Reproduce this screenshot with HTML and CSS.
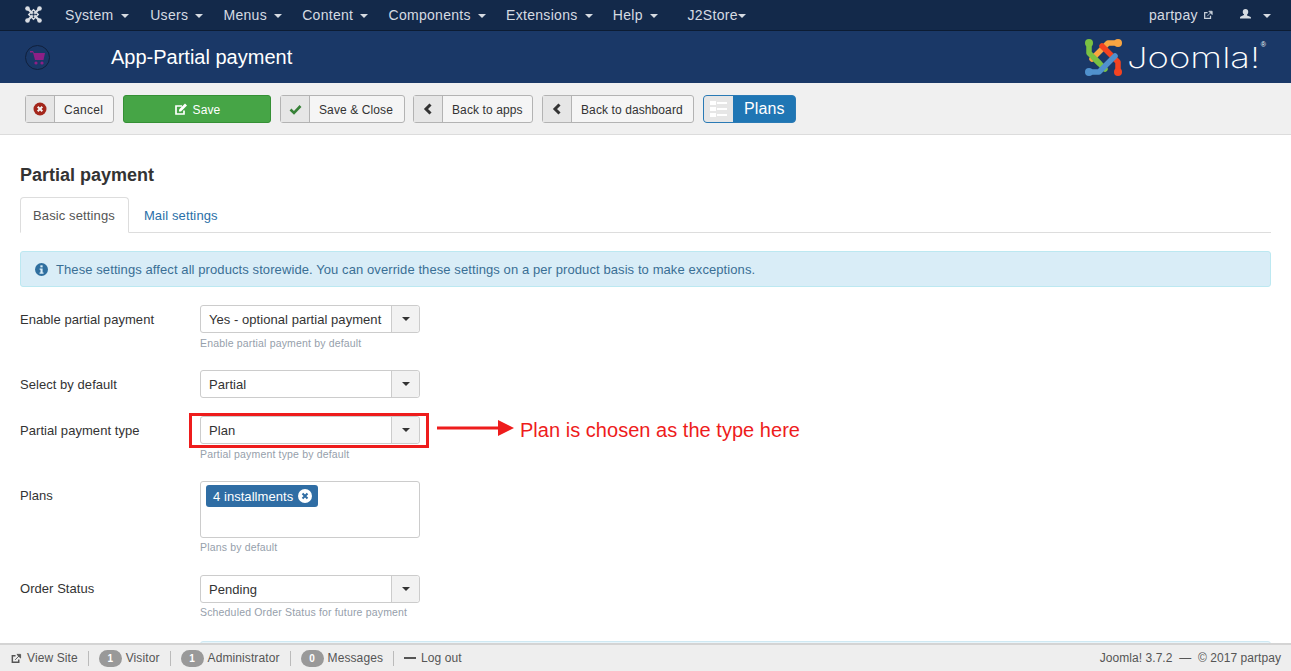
FILE: index.html
```html
<!DOCTYPE html>
<html lang="en">
<head>
<meta charset="utf-8">
<title>App-Partial payment</title>
<link rel="stylesheet" href="styles.css">
</head>
<body>
<div class="page">
  <nav class="navbar">
    <svg class="nav-logo" width="17" height="17" viewBox="0 0 17 17"><g fill="none" stroke="#d9dde3" stroke-linecap="round"><path d="M3 3L14 14M14 3L3 14" stroke-width="2.200"/><path d="M8.500 3.800L13.200 8.500 8.500 13.200 3.800 8.500z" stroke-width="1.500"/></g><g fill="#d9dde3"><circle cx="2.500" cy="2.500" r="2.300"/><circle cx="14.500" cy="2.500" r="2.300"/><circle cx="2.500" cy="14.500" r="2.300"/><circle cx="14.500" cy="14.500" r="2.300"/></g><circle cx="8.500" cy="8.500" r="1.200" fill="#13294a"/></svg>
    <ul class="menu">
      <li class="menu-item">System <i class="caret"></i></li>
      <li class="menu-item">Users <i class="caret"></i></li>
      <li class="menu-item">Menus <i class="caret"></i></li>
      <li class="menu-item">Content <i class="caret"></i></li>
      <li class="menu-item">Components <i class="caret"></i></li>
      <li class="menu-item">Extensions <i class="caret"></i></li>
      <li class="menu-item">Help <i class="caret"></i></li>
      <li class="menu-item store">J2Store<i class="caret tight"></i></li>
    </ul>
    <div class="nav-right">
      <span class="site-link">partpay
        <svg class="ext" width="10" height="10" viewBox="0 0 12 12"><path d="M9 7v3H2V3h3.500" fill="none" stroke="#c8d0da" stroke-width="1.500"/><path d="M5 7.500 L9.500 3M7 1.500h4v4z" fill="#c8d0da" stroke="#c8d0da"/></svg>
      </span>
      <span class="user-link">
        <svg width="11" height="12" viewBox="0 0 12 12"><path d="M6 0.500c2 0 3 1.400 3 3.200 0 1.300-.6 2.300-1.300 2.900v1l3.500 1.500c.5.200.8.600.8 1.100V11H0v-1.300c0-.5.300-.9.800-1.100l3.500-1.500v-1C3.600 6 3 5 3 3.700 3 1.900 4 .5 6 .5z" fill="#d6dbe2"/></svg>
        <i class="caret wide"></i>
      </span>
    </div>
  </nav>
  <header class="header">
    <span class="app-icon">
      <svg width="16" height="16" viewBox="0 0 16 16"><path d="M0 2h3l1 2h11l-1.500 7H5L3 3.500H0z" fill="#8e1f86"/><circle cx="6" cy="14" r="1.600" fill="#8e1f86"/><circle cx="12" cy="14" r="1.600" fill="#8e1f86"/></svg>
    </span>
    <h1 class="page-title">App-Partial payment</h1>
    <div class="brand">
      <svg class="brand-mark" width="37" height="37" viewBox="0 0 37 37">
        <g fill="none" stroke-linecap="round" stroke-linejoin="round" stroke-width="5.500">
          <path d="M4 4V14L20 30" stroke="#7ac143"/>
          <path d="M33 4H23L7 20" stroke="#f9a541"/>
          <path d="M33 33V23L17 7" stroke="#f44321"/>
          <path d="M4 33H14L30 17" stroke="#5091cd"/>
          <path d="M8 18L14 24" stroke="#7ac143"/>
        </g>
        <circle cx="4" cy="4" r="4" fill="#7ac143"/><circle cx="33" cy="4" r="4" fill="#f9a541"/><circle cx="4" cy="33" r="4" fill="#5091cd"/><circle cx="33" cy="33" r="4" fill="#f44321"/>
      </svg>
      <span class="brand-text">Joomla!</span><sup class="brand-reg">®</sup>
    </div>
  </header>
  <div class="toolbar">
    <button class="btn w-cancel"><span class="btn-icon"><svg width="14" height="14" viewBox="0 0 14 14"><circle cx="7" cy="7" r="6.500" fill="#a3261b"/><path d="M4.700 4.700l4.600 4.600M9.300 4.700l-4.600 4.600" stroke="#f3f3f3" stroke-width="2"/></svg></span><span class="btn-label">Cancel</span></button>
    <button class="btn btn-save"><svg width="14" height="13" viewBox="0 0 14 13"><path d="M10 7.500V11H2V3h6" fill="none" stroke="#fff" stroke-width="1.700"/><path d="M5 6.500l6-6 2 2-6 6H5z" fill="#fff"/></svg><span class="save-label">Save</span></button>
    <button class="btn w-close"><span class="btn-icon"><svg width="13" height="11" viewBox="0 0 13 11"><path d="M1.500 5.500l3.500 3.500 6.500-7" fill="none" stroke="#378137" stroke-width="2.600"/></svg></span><span class="btn-label">Save &amp; Close</span></button>
    <button class="btn w-apps"><span class="btn-icon"><svg width="10" height="12" viewBox="0 0 10 12"><path d="M7.500 1.500L3 6l4.500 4.500" fill="none" stroke="#333" stroke-width="3"/></svg></span><span class="btn-label">Back to apps</span></button>
    <button class="btn w-dash"><span class="btn-icon"><svg width="10" height="12" viewBox="0 0 10 12"><path d="M7.500 1.500L3 6l4.500 4.500" fill="none" stroke="#333" stroke-width="3"/></svg></span><span class="btn-label">Back to dashboard</span></button>
    <button class="btn btn-plans"><span class="plans-icon"><svg width="17" height="16" viewBox="0 0 17 16"><path d="M0 0h6v4H0zM0 6h6v4H0zM0 12h6v4H0z" fill="#fff"/><path d="M7 1h10v2H7zM7 7h10v2H7zM7 13h10v2H7z" fill="#fff"/></svg></span><span class="plans-label">Plans</span></button>
  </div>
  <main class="content">
    <h2 class="section-title">Partial payment</h2>
    <ul class="tabs">
      <li class="tab active">Basic settings</li>
      <li class="tab">Mail settings</li>
    </ul>
    <div class="alert">
      <svg width="13" height="13" viewBox="0 0 14 14"><circle cx="7" cy="7" r="7" fill="#2f6f9f"/><rect x="5.800" y="2.500" width="2.400" height="2.200" fill="#d9edf7"/><path d="M5 6h3.200v4.200H9.200v1.300H4.900v-1.300h1V7.300H5z" fill="#d9edf7"/></svg>
      <span>These settings affect all products storewide. You can override these settings on a per product basis to make exceptions.</span>
    </div>
    <div class="field first">
      <label class="field-label">Enable partial payment</label>
      <div class="field-control">
        <div class="select"><span class="select-value">Yes - optional partial payment</span><span class="select-arrow"><i class="caret dark"></i></span></div>
        <p class="help">Enable partial payment by default</p>
      </div>
    </div>
    <div class="field second">
      <label class="field-label">Select by default</label>
      <div class="field-control">
        <div class="select"><span class="select-value">Partial</span><span class="select-arrow"><i class="caret dark"></i></span></div>
      </div>
    </div>
    <div class="field third">
      <label class="field-label">Partial payment type</label>
      <div class="field-control">
        <div class="select"><span class="select-value">Plan</span><span class="select-arrow"><i class="caret dark"></i></span></div>
        <p class="help">Partial payment type by default</p>
      </div>
    </div>
    <div class="field fourth">
      <label class="field-label">Plans</label>
      <div class="field-control">
        <div class="multi"><span class="chip">4 installments
          <svg width="14" height="14" viewBox="0 0 14 14"><circle cx="7" cy="7" r="7" fill="#fff"/><path d="M4.500 4.500l5 5M9.500 4.500l-5 5" stroke="#2f6da4" stroke-width="2"/></svg></span></div>
        <p class="help">Plans by default</p>
      </div>
    </div>
    <div class="field fifth">
      <label class="field-label">Order Status</label>
      <div class="field-control">
        <div class="select"><span class="select-value">Pending</span><span class="select-arrow"><i class="caret dark"></i></span></div>
        <p class="help">Scheduled Order Status for future payment</p>
      </div>
    </div>
    <div class="next-box"></div>
    <div class="callout">
      <svg class="arrow" width="77" height="18" viewBox="0 0 77 18"><path d="M0 7.500h62v3H0z" fill="#ee1c1c"/><path d="M61 1l16 8-16 8z" fill="#ee1c1c"/></svg>
      <span class="callout-text">Plan is chosen as the type here</span>
    </div>
    <div class="highlight"></div>
  </main>
  <footer class="status">
    <span class="status-item"><svg width="12" height="11" viewBox="0 0 12 12"><path d="M9 7v3H2V3h3.500" fill="none" stroke="#555" stroke-width="1.600"/><path d="M5 7.500L9.500 3M7 1.500h4v4z" fill="#555" stroke="#555"/></svg>View Site</span>
    <span class="status-item"><b class="count">1</b>Visitor</span>
    <span class="status-item"><b class="count">1</b>Administrator</span>
    <span class="status-item"><b class="count">0</b>Messages</span>
    <span class="status-item"><i class="minus"></i>Log out</span>
    <span class="copyright">Joomla! 3.7.2 &nbsp;—&nbsp; © 2017 partpay</span>
  </footer>
</div>
</body>
</html>
```
FILE: styles.css
```css
* { box-sizing: border-box; }
html, body { margin: 0; height: 100%; overflow: hidden; }
body { font-family: "Liberation Sans", Arial, sans-serif; font-size: 13px; color: #333; background: #fff; }
.page { display: flex; flex-direction: column; height: 671px; }

.caret { display: inline-block; width: 0; height: 0; border-left: 4px solid transparent; border-right: 4px solid transparent; border-top: 4px solid #d6dbe2; margin-left: 3px; vertical-align: middle; }
.caret.tight { margin-left: 0; }
.caret.wide { margin-left: 8px; }
.caret.dark { border-top-color: #333; margin: 0; }

.navbar { height: 31px; flex: none; display: flex; align-items: center; background: #13294a; border-bottom: 1px solid #0c1c33; color: #d6dbe2; font-size: 14px; letter-spacing: 0.3px; padding: 0 20px 1px 25px; }
.nav-logo { flex: none; }
.menu { display: flex; list-style: none; margin: 0 0 0 23px; padding: 0; }
.menu-item { margin-right: 20px; white-space: nowrap; }
.menu-item:first-child { margin-right: 21.500px; }
.menu-item.store { margin-left: 9.500px; }
.nav-right { margin-left: auto; display: flex; align-items: center; gap: 27px; }
.site-link { display: flex; align-items: center; gap: 5px; }

.header { height: 52px; flex: none; display: flex; align-items: center; background: #1a3867; padding: 0 25px; }
.app-icon { width: 25px; height: 25px; border-radius: 50%; border: 1.500px solid #10203c; display: flex; align-items: center; justify-content: center; }
.page-title { margin: 0 0 0 61px; font-size: 20px; font-weight: 400; color: #fff; line-height: 1; }
.brand { margin-left: auto; display: flex; align-items: center; color: #fff; }
.brand-mark { flex: none; }
.brand-text { width: 133px; margin-left: 5px; font-family: Inter, sans-serif; font-weight: 200; font-size: 29px; line-height: 1; white-space: nowrap; transform: scaleX(1.26); transform-origin: left center; }
.brand-reg { font-size: 7px; align-self: flex-start; margin: 2px 0 0 1px; }

.toolbar { height: 52px; flex: none; display: flex; align-items: center; gap: 9px; padding: 1px 25px 0; background: #f0f0f0; border-bottom: 1px solid #dcdcdc; }
.btn { height: 28px; padding: 0; display: flex; align-items: stretch; background: #f5f5f5; border: 1px solid #b3b3b3; border-radius: 3px; font: inherit; font-size: 12px; letter-spacing: 0.1px; color: #333; }
.w-cancel { width: 89px; }
.w-close { width: 125px; }
.w-apps { width: 120px; margin-left: -1px; }
.w-dash { width: 152px; }
.btn-icon { width: 29px; display: flex; align-items: center; justify-content: center; background: #e6e6e6; border-right: 1px solid #b3b3b3; }
.btn-label { display: flex; align-items: center; padding: 2px 0 0 9px; white-space: nowrap; }
.w-cancel .btn-label { letter-spacing: 0.3px; }
.btn-save { width: 148px; align-items: center; justify-content: center; gap: 5px; background: #46a546; border-color: #359035; color: #fff; }
.save-label { padding-top: 2px; }
.btn-plans { width: 93px; height: 28px; border-color: #2a7ab5; background: #1f76b4; color: #fff; font-size: 16px; letter-spacing: 0.1px; border-radius: 4px; }
.plans-icon { width: 29px; display: flex; align-items: center; justify-content: center; background: #e6e6e6; border-radius: 3px 0 0 3px; }
.plans-label { display: flex; align-items: center; padding: 0 0 0 11px; }

.content { flex: 1; position: relative; overflow: hidden; padding: 30px 20px 0; letter-spacing: 0.05px; }
.section-title { margin: 0; font-size: 18px; line-height: 20px; font-weight: 700; color: #333; letter-spacing: 0; }
.tabs { display: flex; list-style: none; margin: 12px 0 0; padding: 0; height: 36px; border-bottom: 1px solid #ddd; letter-spacing: 0.12px; }
.tab { padding: 0 14px; height: 36px; line-height: 35px; color: #2a6fa8; border: 1px solid transparent; }
.tab.active { color: #555; background: #fff; border-color: #ddd #ddd #fff; border-radius: 4px 4px 0 0; padding: 0 13px 0 12px; }
.alert { margin-top: 18px; height: 36px; display: flex; align-items: center; gap: 8px; padding: 0 14px; background: #d9edf7; border: 1px solid #bce8f1; border-radius: 3px; color: #3a6f95; letter-spacing: 0.09px; }
.field { display: flex; }
.field.first { margin-top: 18px; }
.field.second { margin-top: 20px; }
.field.third { margin-top: 17px; }
.field.fourth { margin-top: 20px; }
.field.fifth { margin-top: 21px; }
.field-label { width: 180px; flex: none; line-height: 29px; }
.fifth .field-label { line-height: 28px; }
.field-control { width: 220px; }
.select { height: 28px; display: flex; background: #fff; border: 1px solid #ccc; border-radius: 3px; }
.select-value { flex: 1; padding-left: 8px; line-height: 27px; white-space: nowrap; }
.select-arrow { width: 28px; display: flex; align-items: center; justify-content: center; background: #f2f2f2; border-left: 1px solid #ccc; border-radius: 0 3px 3px 0; }
.help { margin: 4px 0 0; font-size: 10.500px; line-height: 13px; color: #96a0ab; white-space: nowrap; letter-spacing: 0.17px; }
.fifth .help { margin-top: 3px; }
.multi { height: 57px; padding: 3px 5px; background: #fff; border: 1px solid #ccc; border-radius: 3px; }
.multi + .help { margin-top: 3px; }
.chip { display: inline-flex; align-items: center; gap: 5px; height: 22px; padding: 0 6px 0 7px; background: #2f6da4; color: #fff; border-radius: 3px; }
.next-box { position: absolute; left: 200px; right: 20px; top: 506px; height: 40px; background: #e8f5fb; border: 1px solid #cfe9f3; border-radius: 3px; }
.highlight { position: absolute; left: 189px; top: 278px; width: 240px; height: 35px; border: 3px solid #ee1c1c; }
.callout { position: absolute; left: 437px; top: 283px; display: flex; align-items: center; gap: 6px; color: #ee1c1c; letter-spacing: 0.03px; }
.arrow { margin-bottom: 4px; }
.callout-text { font-size: 20px; line-height: 24px; white-space: nowrap; }

.status { height: 28px; flex: none; display: flex; align-items: center; padding: 0 10px; background: #eeeeee; border-top: 2px solid #d4d4d4; font-size: 12px; letter-spacing: 0.1px; color: #555; }
.status-item { display: flex; align-items: center; height: 15px; padding-right: 10px; margin-right: 10px; border-right: 1px solid #bbb; }
.status-item svg { margin-right: 5px; }
.status-item:nth-child(5) { border-right: 0; }
.count { display: inline-block; flex: none; width: 23px; height: 17px; margin-right: 4px; line-height: 17px; text-align: center; font-size: 10px; color: #fff; background: #999; border-radius: 9px; }
.minus { display: inline-block; width: 12px; height: 2px; margin-right: 5px; background: #555; }
.copyright { margin-left: auto; letter-spacing: 0.05px; }
```
